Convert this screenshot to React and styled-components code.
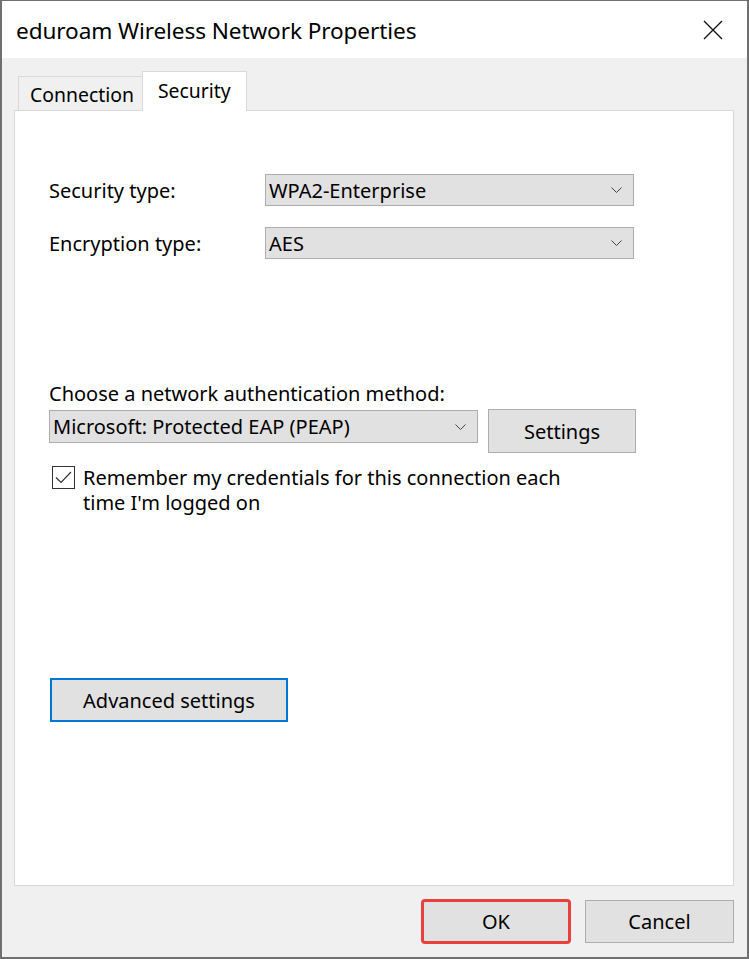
import React from "react";
import styled, { createGlobalStyle } from "styled-components";

const Global = createGlobalStyle`
  html, body { margin: 0; padding: 0; }
  body { width: 749px; height: 959px; overflow: hidden; background: #6f6f6f; }
  * { box-sizing: border-box; }
`;

const FONT = `"Noto Sans", "Open Sans", sans-serif`;

const Window = styled.div`
  width: 749px;
  height: 959px;
  border: 2px solid #6f6f6f;
  border-top-width: 1px;
  display: flex;
  flex-direction: column;
  font-family: ${FONT};
  color: #000;
  background: #f0f0f0;
`;

const TitleBar = styled.div`
  flex-shrink: 0;
  height: 57px;
  background: #fff;
  display: flex;
  align-items: center;
  justify-content: space-between;
  padding: 2px 24px 0 14px;
`;

const Title = styled.div`
  font-size: 22.6px;
  letter-spacing: -0.1px;
`;

const CloseButton = styled.div`
  width: 20px;
  height: 20px;
  display: flex;
  margin-bottom: 2px;
`;

const Body = styled.div`
  flex: 1;
  min-height: 0;
  display: flex;
  flex-direction: column;
  padding: 13px 13px 13px 12px;
`;

const TabRow = styled.div`
  flex-shrink: 0;
  display: flex;
  align-items: flex-end;
  padding-left: 4px;
  height: 40px;
  margin-bottom: -1px;
  position: relative;
  z-index: 1;
`;

const Tab = styled.div`
  height: ${(p) => (p.$active ? "40px" : "35px")};
  padding: ${(p) => (p.$active ? "7px 15px 0 15px" : "6px 8px 0 11px")};
  margin-left: ${(p) => (p.$active ? "-1px" : "0")};
  background: ${(p) => (p.$active ? "#fff" : "#f0f0f0")};
  border: 1px solid #d9d9d9;
  border-bottom: ${(p) => (p.$active ? "none" : "1px solid #d9d9d9")};
  font-size: 19.4px;
  line-height: 24px;
  white-space: nowrap;
`;

const Panel = styled.div`
  flex: 1;
  min-height: 0;
  background: #fff;
  border: 1px solid #d9d9d9;
  padding: 63px 0 0 34px;
  display: flex;
  flex-direction: column;
`;

const FieldGrid = styled.div`
  display: grid;
  grid-template-columns: 216px 369px;
  row-gap: 21px;
  align-items: center;
`;

const Label = styled.div`
  font-size: 20px;
  line-height: 25px;
`;

const Select = styled.div`
  width: ${(p) => p.$width || "369px"};
  height: ${(p) => p.$height || "32px"};
  background: #e1e1e1;
  border: 1px solid #adadad;
  display: flex;
  align-items: center;
  justify-content: space-between;
  padding: 0 11px 0 3px;
  font-size: 20px;
  white-space: nowrap;
`;

const Chevron = () => (
  <svg width="11" height="6" viewBox="0 0 11 6">
    <path d="M0.5 0.5 L5.5 5.5 L10.5 0.5" fill="none" stroke="#444" strokeWidth="1" />
  </svg>
);

const AuthLabel = styled(Label)`
  margin-top: 122px;
  margin-bottom: 4px;
`;

const AuthRow = styled.div`
  display: flex;
  align-items: flex-start;
  gap: 10px;
`;

const Button = styled.button`
  flex-shrink: 0;
  width: ${(p) => p.$width || "148px"};
  height: ${(p) => p.$height || "44px"};
  background: #e1e1e1;
  border: ${(p) => (p.$focused ? "2px solid #0078d7" : "1px solid #adadad")};
  font-family: ${FONT};
  font-size: 20px;
  color: #000;
  padding: 0;
  display: flex;
  align-items: center;
  justify-content: center;
`;

const SettingsButton = styled(Button)`
  margin-top: -1px;
`;

const CheckRow = styled.div`
  display: flex;
  align-items: flex-start;
  gap: 8px;
  margin-top: 12px;
  padding-left: 3px;
`;

const CheckBox = styled.div`
  width: 23px;
  height: 23px;
  border: 1px solid #333;
  background: #fff;
  display: flex;
  align-items: center;
  justify-content: center;
  flex-shrink: 0;
  margin-top: 1px;
`;

const CheckText = styled.div`
  font-size: 20px;
  line-height: 25px;
  width: 520px;
`;

const AdvancedButton = styled(Button)`
  margin-top: 163px;
  margin-left: 1px;
`;

const Footer = styled.div`
  flex-shrink: 0;
  display: flex;
  justify-content: flex-end;
  align-items: flex-start;
  gap: 14px;
  padding-top: 13px;
`;

const HighlightButton = styled(Button)`
  border: 3px solid #e8403c;
  border-radius: 4px;
`;

const CancelButton = styled(Button)`
  margin-top: 1px;
`;

export default function App() {
  return (
    <>
      <Global />
      <Window>
        <TitleBar>
          <Title>eduroam Wireless Network Properties</Title>
          <CloseButton>
            <svg width="20" height="20" viewBox="0 0 20 20">
              <path d="M1 1 L19 19 M19 1 L1 19" stroke="#111" strokeWidth="1.3" fill="none" />
            </svg>
          </CloseButton>
        </TitleBar>
        <Body>
          <TabRow>
            <Tab>Connection</Tab>
            <Tab $active>Security</Tab>
          </TabRow>
          <Panel>
            <FieldGrid>
              <Label>Security type:</Label>
              <Select>
                <span>WPA2-Enterprise</span>
                <Chevron />
              </Select>
              <Label>Encryption type:</Label>
              <Select>
                <span>AES</span>
                <Chevron />
              </Select>
            </FieldGrid>
            <AuthLabel>Choose a network authentication method:</AuthLabel>
            <AuthRow>
              <Select $width="429px" $height="33px">
                <span>Microsoft: Protected EAP (PEAP)</span>
                <Chevron />
              </Select>
              <SettingsButton $width="148px" $height="44px">Settings</SettingsButton>
            </AuthRow>
            <CheckRow>
              <CheckBox>
                <svg width="17" height="13" viewBox="0 0 17 13">
                  <path d="M1 6.5 L6 11.5 L16 1" stroke="#333" strokeWidth="1.2" fill="none" />
                </svg>
              </CheckBox>
              <CheckText>
                Remember my credentials for this connection each
                <br />
                time I'm logged on
              </CheckText>
            </CheckRow>
            <AdvancedButton $focused $width="238px" $height="44px">
              Advanced settings
            </AdvancedButton>
          </Panel>
          <Footer>
            <HighlightButton $width="150px" $height="45px">OK</HighlightButton>
            <CancelButton $width="149px" $height="43px">Cancel</CancelButton>
          </Footer>
        </Body>
      </Window>
    </>
  );
}
